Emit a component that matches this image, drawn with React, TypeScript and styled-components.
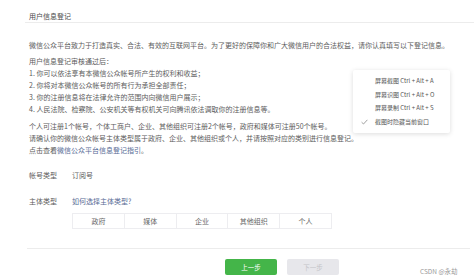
import styled, { createGlobalStyle } from "styled-components";

const GlobalStyle = createGlobalStyle`
  html, body {
    margin: 0;
    padding: 0;
    background: #fff;
  }
  body {
    font-family: "Noto Sans CJK SC", "Noto Sans", sans-serif;
    color: #5c5c5c;
    -webkit-font-smoothing: antialiased;
  }
`;

const Page = styled.div`
  position: relative;
  width: 474px;
  height: 280px;
  overflow: hidden;
  font-size: 7px;
  line-height: 12px;
`;

const Header = styled.div`
  margin-left: 25px;
  padding: 10px 0 0 4px;
  height: 12px;
  border-bottom: 1px solid #ececec;
  color: #4a4a4a;
`;

const Content = styled.div`
  padding-left: 29px;
`;

const Para = styled.p<{ $top: number }>`
  margin: ${(p) => p.$top}px 0 0;
  white-space: nowrap;
`;

const Link = styled.span`
  color: #576b95;
`;

const FieldRow = styled.div<{ $top: number }>`
  display: flex;
  margin-top: ${(p) => p.$top}px;
`;

const Label = styled.div`
  width: 43px;
`;

const Value = styled.div<{ $link?: boolean }>`
  color: ${(p) => (p.$link ? "#576b95" : "#5c5c5c")};
`;

const Segments = styled.div`
  display: flex;
  margin: 6px 0 0 43px;
  width: 260px;
  height: 16px;
  border: 1px solid #ededf0;
  box-sizing: border-box;
`;

const Segment = styled.div`
  flex: 1;
  display: flex;
  align-items: center;
  justify-content: center;
  color: #666;
  & + & {
    border-left: 1px solid #ededf0;
  }
`;

const Divider = styled.div`
  margin: 19px 4px 0 27px;
  border-top: 1px solid #ececec;
`;

const Footer = styled.div`
  display: flex;
  gap: 10px;
  padding: 10px 0 0 225px;
`;

const Button = styled.div<{ $primary?: boolean }>`
  width: 52px;
  height: 16px;
  border-radius: 2px;
  display: flex;
  align-items: center;
  justify-content: center;
  font-size: 6.5px;
  background: ${(p) => (p.$primary ? "#44b549" : "#e7e7eb")};
  color: ${(p) => (p.$primary ? "#fff" : "#c4c4c8")};
`;

const Watermark = styled.div`
  position: absolute;
  left: 420px;
  top: 265px;
  font-size: 6.5px;
  color: #999;
`;

const Menu = styled.div`
  position: absolute;
  left: 353px;
  top: 70px;
  width: 97px;
  height: 63px;
  box-sizing: border-box;
  padding-top: 4px;
  background: #fff;
  border-radius: 2px;
  box-shadow: 0 1px 5px rgba(0, 0, 0, 0.14);
  font-size: 6px;
`;

const MenuItem = styled.div`
  display: flex;
  align-items: center;
  height: 13.7px;
  color: #555;
`;

const Check = styled.div`
  width: 22px;
  display: flex;
  justify-content: center;
`;

const steps = [
  "1. 你可以依法享有本微信公众帐号所产生的权利和收益；",
  "2. 你将对本微信公众帐号的所有行为承担全部责任；",
  "3. 你的注册信息将在法律允许的范围内向微信用户展示；",
  "4. 人民法院、检察院、公安机关等有权机关可向腾讯依法调取你的注册信息等。",
];

const types = ["政府", "媒体", "企业", "其他组织", "个人"];

const menuItems = [
  { label: "屏幕截图 Ctrl + Alt + A", checked: false },
  { label: "屏幕识图 Ctrl + Alt + O", checked: false },
  { label: "屏幕录制 Ctrl + Alt + S", checked: false },
  { label: "截图时隐藏当前窗口", checked: true },
];

const App = () => {
  return (
    <Page>
      <GlobalStyle />
      <Header>用户信息登记</Header>
      <Content>
        <Para $top={16}>
          微信公众平台致力于打造真实、合法、有效的互联网平台。为了更好的保障你和广大微信用户的合法权益，请你认真填写以下登记信息。
        </Para>
        <Para $top={4}>
          用户信息登记审核通过后：
          {steps.map((s) => (
            <div key={s}>{s}</div>
          ))}
        </Para>
        <Para $top={5}>
          个人可注册1个帐号，个体工商户、企业、其他组织可注册2个帐号，政府和媒体可注册50个帐号。
          <br />
          请确认你的微信公众帐号主体类型属于政府、企业、其他组织或个人，并请按照对应的类别进行信息登记。
          <br />
          点击查看<Link>微信公众平台信息登记指引</Link>。
        </Para>
        <FieldRow $top={13}>
          <Label>帐号类型</Label>
          <Value>订阅号</Value>
        </FieldRow>
        <FieldRow $top={14}>
          <Label>主体类型</Label>
          <Value $link>如何选择主体类型?</Value>
        </FieldRow>
        <Segments>
          {types.map((t) => (
            <Segment key={t}>{t}</Segment>
          ))}
        </Segments>
      </Content>
      <Divider />
      <Footer>
        <Button $primary>上一步</Button>
        <Button>下一步</Button>
      </Footer>
      <Watermark>CSDN @永劫</Watermark>
      <Menu>
        {menuItems.map((m) => (
          <MenuItem key={m.label}>
            <Check>
              {m.checked && (
                <svg width="7" height="6" viewBox="0 0 7 6">
                  <path d="M0.6 3.2 L2.5 5 L6.4 0.8" fill="none" stroke="#888" strokeWidth="0.8" />
                </svg>
              )}
            </Check>
            {m.label}
          </MenuItem>
        ))}
      </Menu>
    </Page>
  );
};

export default App;
